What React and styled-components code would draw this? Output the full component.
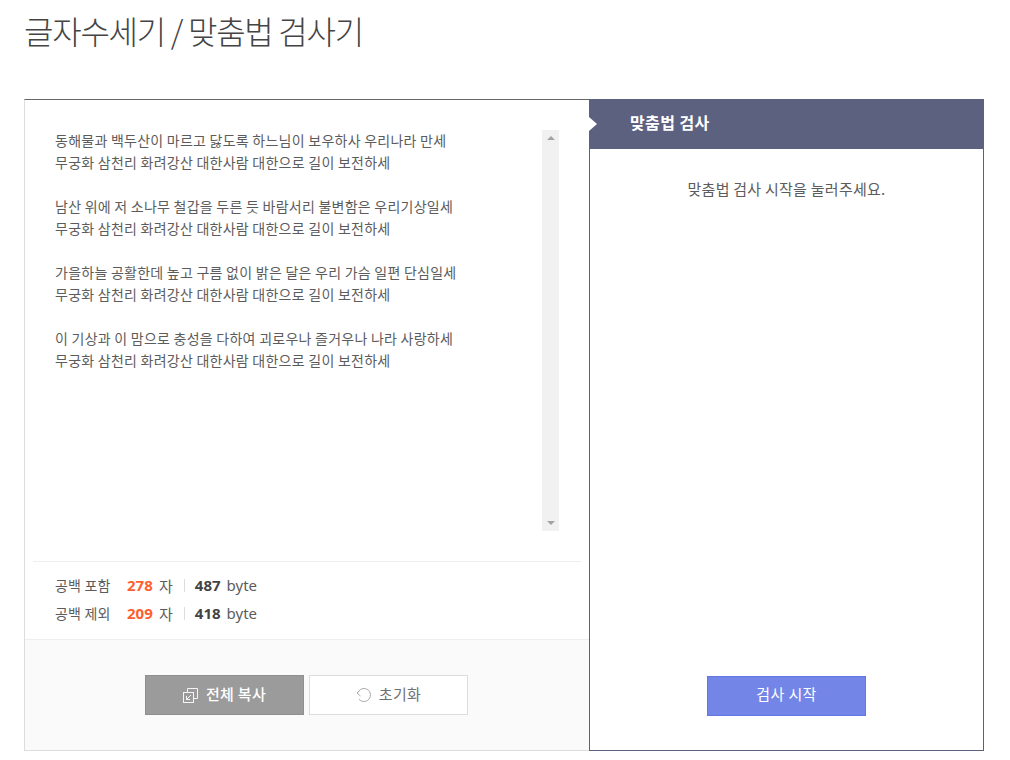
import React from "react";
import styled, { createGlobalStyle } from "styled-components";

const GlobalStyle = createGlobalStyle`
  html, body {
    margin: 0;
    padding: 0;
    background: #fff;
  }
  body {
    font-family: "Noto Sans CJK KR", "Noto Sans", sans-serif;
    color: #555;
  }
`;

const Page = styled.div`
  width: 1010px;
  height: 760px;
  padding: 0 26px 0 24px;
  box-sizing: border-box;
  overflow: hidden;
`;

const Title = styled.h1`
  margin: 0;
  height: 99px;
  padding-top: 7px;
  box-sizing: border-box;
  font-size: 32px;
  line-height: 46px;
  font-weight: 300;
  letter-spacing: -1.25px;
  color: #444;
`;

const Layout = styled.div`
  display: flex;
  height: 652px;
`;

const Editor = styled.section`
  width: 565px;
  box-sizing: border-box;
  display: flex;
  flex-direction: column;
  border: 1px solid #ddd;
  border-top-color: #666;
  border-right: 0;
`;

const InputArea = styled.div`
  height: 462px;
  box-sizing: border-box;
  margin: 0 8px;
  padding: 30px 22px 0;
  display: flex;
  justify-content: space-between;
  border-bottom: 1px solid #eee;
`;

const Lyrics = styled.div`
  margin-top: -1px;
  font-size: 14px;
  line-height: 22px;
  letter-spacing: 0.25px;
  color: #5c5c5c;
  white-space: pre-line;
`;

const Scrollbar = styled.div`
  width: 17px;
  height: 401px;
  background: #f1f1f1;
  display: flex;
  flex-direction: column;
  justify-content: space-between;
  align-items: center;
  padding: 6px 0;
  box-sizing: border-box;
`;

const Arrow = styled.span`
  width: 0;
  height: 0;
  border-left: 4px solid transparent;
  border-right: 4px solid transparent;
  ${(p) =>
    p.$down ? "border-top: 4px solid #a3a3a3;" : "border-bottom: 4px solid #a3a3a3;"}
`;

const Stats = styled.div`
  height: 78px;
  box-sizing: border-box;
  padding: 9px 30px 0;
  display: flex;
  flex-direction: column;
  border-bottom: 1px solid #eee;
`;

const StatRow = styled.div`
  height: 28px;
  display: flex;
  align-items: center;
  font-size: 15px;
  color: #5c5c5c;
`;

const StatLabel = styled.span`
  width: 72px;
  font-size: 14px;
  letter-spacing: 0.2px;
`;

const Count = styled.strong`
  width: 32px;
  font-size: 15px;
  font-weight: 700;
  font-family: "Noto Sans", sans-serif;
  color: #ff5f2e;
`;

const Divider = styled.i`
  width: 1px;
  height: 13px;
  margin: 0 10px 0 11px;
  background: #ddd;
`;

const Bytes = styled.strong`
  margin-right: 6px;
  font-size: 15px;
  font-weight: 700;
  font-family: "Noto Sans", sans-serif;
  color: #444;
`;

const ByteUnit = styled.span`
  font-family: "Noto Sans", sans-serif;
  font-size: 15px;
`;

const Actions = styled.div`
  flex: 1;
  background: #fafafa;
  display: flex;
  justify-content: center;
  gap: 5px;
  padding: 35px 1px 0 0;
`;

const ActionButton = styled.button`
  width: 159px;
  height: 40px;
  box-sizing: border-box;
  display: flex;
  align-items: center;
  justify-content: center;
  gap: ${(p) => (p.$primary ? "8px" : "7px")};
  padding: 0 0 4px;
  font-family: inherit;
  font-size: 15px;
  letter-spacing: 0.3px;
  font-weight: ${(p) => (p.$primary ? 500 : 400)};
  color: ${(p) => (p.$primary ? "#fff" : "#707070")};
  background: ${(p) => (p.$primary ? "#9b9b9b" : "#fff")};
  border: 1px solid ${(p) => (p.$primary ? "#8f8f8f" : "#ddd")};

  svg {
    flex: none;
    margin-top: 4px;
  }
`;

const Checker = styled.section`
  flex: 1;
  display: flex;
  flex-direction: column;
  box-sizing: border-box;
  border: 1px solid #5d6180;
  border-top: 0;
`;

const CheckerHeader = styled.div`
  position: relative;
  height: 50px;
  margin: 0 -1px;
  padding-left: 41px;
  background: #5d6180;
  font-size: 16px;
  font-weight: 700;
  letter-spacing: 0.4px;
  line-height: 47px;
  color: #fff;

  &::before {
    content: "";
    position: absolute;
    left: 0;
    top: 18px;
    border-left: 8px solid #fff;
    border-top: 7px solid transparent;
    border-bottom: 7px solid transparent;
  }
`;

const CheckerBody = styled.div`
  flex: 1;
  display: flex;
  flex-direction: column;
  align-items: center;
  padding: 29px 0 34px;
`;

const Hint = styled.p`
  flex: 1;
  margin: 0;
  font-size: 15px;
  line-height: 22px;
  letter-spacing: 0.25px;
  color: #5c5c5c;
`;

const StartButton = styled.button`
  width: 159px;
  height: 40px;
  padding: 0 0 6px;
  box-sizing: border-box;
  font-family: inherit;
  font-size: 15px;
  letter-spacing: 0.4px;
  color: #fff;
  background: #7386e8;
  border: 1px solid #6178e4;
`;

const lyrics = `동해물과 백두산이 마르고 닳도록 하느님이 보우하사 우리나라 만세
무궁화 삼천리 화려강산 대한사람 대한으로 길이 보전하세

남산 위에 저 소나무 철갑을 두른 듯 바람서리 불변함은 우리기상일세
무궁화 삼천리 화려강산 대한사람 대한으로 길이 보전하세

가을하늘 공활한데 높고 구름 없이 밝은 달은 우리 가슴 일편 단심일세
무궁화 삼천리 화려강산 대한사람 대한으로 길이 보전하세

이 기상과 이 맘으로 충성을 다하여 괴로우나 즐거우나 나라 사랑하세
무궁화 삼천리 화려강산 대한사람 대한으로 길이 보전하세`;

const stats = [
  { label: "공백 포함", chars: 278, bytes: 487 },
  { label: "공백 제외", chars: 209, bytes: 418 },
];

const CopyIcon = () => (
  <svg width="15" height="15" viewBox="0 0 15 15" fill="none" stroke="#f4f4f4" strokeWidth="1">
    <path d="M4.5 4.5V0.5H14.5V10.5H10.5" />
    <rect x="0.5" y="4.5" width="10" height="10" />
    <path d="M3.5 11.5L8 7M3.5 8V11.5H7" />
  </svg>
);

const ResetIcon = () => (
  <svg width="16" height="16" viewBox="0 0 16 16" fill="none" stroke="#aaa" strokeWidth="1">
    <path d="M2 5.5C3.2 3 5.4 1.5 8 1.5A6.5 6.5 0 1 1 3 12.2" />
    <path d="M4.5 2.5L1 6L4.5 9" />
  </svg>
);

const App = () => {
  return (
    <Page>
      <GlobalStyle />
      <Title>글자수세기 / 맞춤법 검사기</Title>
      <Layout>
        <Editor>
          <InputArea>
            <Lyrics>{lyrics}</Lyrics>
            <Scrollbar>
              <Arrow />
              <Arrow $down />
            </Scrollbar>
          </InputArea>
          <Stats>
            {stats.map((s) => (
              <StatRow key={s.label}>
                <StatLabel>{s.label}</StatLabel>
                <Count>{s.chars}</Count>
                <span>자</span>
                <Divider />
                <Bytes>{s.bytes}</Bytes>
                <ByteUnit>byte</ByteUnit>
              </StatRow>
            ))}
          </Stats>
          <Actions>
            <ActionButton $primary>
              <CopyIcon />
              전체 복사
            </ActionButton>
            <ActionButton>
              <ResetIcon />
              초기화
            </ActionButton>
          </Actions>
        </Editor>
        <Checker>
          <CheckerHeader>맞춤법 검사</CheckerHeader>
          <CheckerBody>
            <Hint>맞춤법 검사 시작을 눌러주세요.</Hint>
            <StartButton>검사 시작</StartButton>
          </CheckerBody>
        </Checker>
      </Layout>
    </Page>
  );
};

export default App;
